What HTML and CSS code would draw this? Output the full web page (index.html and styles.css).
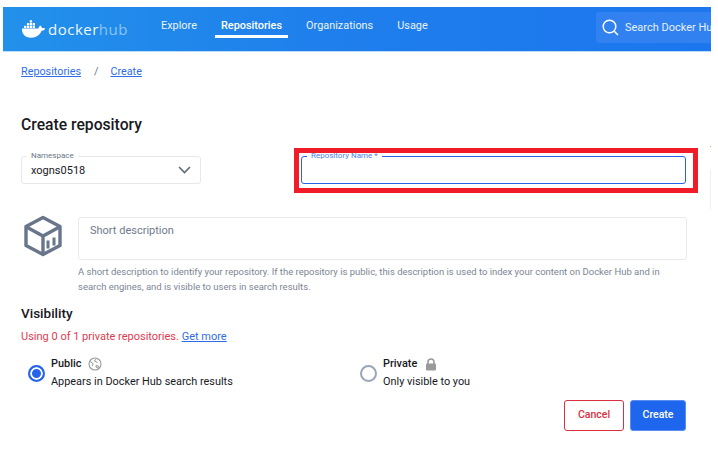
FILE: index.html
```html
<!DOCTYPE html>
<html lang="en">
<head>
<meta charset="utf-8">
<title>Create repository</title>
<link rel="stylesheet" href="styles.css">
</head>
<body>
<div class="page">
  <header class="topbar">
    <div class="brand">
      <svg class="whale" width="25" height="18" viewBox="0 0 25 18" aria-hidden="true">
        <path fill="#fff" d="M1 8.600h16.400c.3-1.400 1-2.500 2-3.100 1 .8 1.500 1.800 1.600 2.700 1.100-.3 2.300-.2 3.300.4-.7 1.500-2 2.200-3.700 2.200C19 15 15.500 17.700 10 17.700 4 17.700 .6 14 1 8.600z"/>
        <path fill="#fff" d="M3 5.700h2.300v2.300H3zM5.900 5.700h2.300v2.300H5.900zM8.800 5.700h2.300v2.300H8.800zM11.700 5.700H14v2.300h-2.300zM5.900 3h2.300v2.300H5.900zM8.800 3h2.300v2.300H8.800zM11.700 3H14v2.300h-2.300zM8.800 .3h2.300v2.300H8.800z"/>
      </svg>
      <span class="brand-docker">docker</span><span class="brand-hub">hub</span>
    </div>
    <nav class="nav">
      <a class="nav-item">Explore</a>
      <a class="nav-item nav-active">Repositories</a>
      <a class="nav-item">Organizations</a>
      <a class="nav-item">Usage</a>
    </nav>
    <div class="search">
      <svg class="search-icon" width="17" height="17" viewBox="0 0 17 17" aria-hidden="true"><circle cx="7.500" cy="7.500" r="6.300" fill="none" stroke="#fff" stroke-width="1.500"/><path d="M12.200 12.200l3.800 3.800" stroke="#fff" stroke-width="1.500" fill="none"/></svg>
      <span class="search-text">Search Docker Hub</span>
    </div>
  </header>

  <main class="content">
    <div class="crumbs"><a class="link">Repositories</a><span class="crumb-sep">/</span><a class="link">Create</a></div>
    <h1 class="title">Create repository</h1>

    <div class="name-row">
      <div class="field ns">
        <span class="legend">Namespace</span>
        <span class="ns-value">xogns0518</span>
        <svg class="chev" width="13" height="8" viewBox="0 0 13 8" aria-hidden="true"><path d="M1 1l5.500 5.500L12 1" fill="none" stroke="#5f6b7c" stroke-width="1.600"/></svg>
      </div>
      <div class="field repo">
        <span class="legend legend-blue">Repository Name *</span>
      </div>
    </div>

    <div class="desc-row">
      <svg class="box" width="40" height="42" viewBox="0 0 40 42" aria-hidden="true">
        <path d="M20 2.500L37 11.500V30.500L20 39.500L3 30.500V11.500Z" fill="none" stroke="#68758a" stroke-width="3.400" stroke-linejoin="round"/>
        <path d="M3.500 12L20 21L36.500 12M20 21V39" fill="none" stroke="#68758a" stroke-width="3.400"/>
        <path d="M25 25.500v8M31 22.500v8" fill="none" stroke="#68758a" stroke-width="3"/>
      </svg>
      <div class="desc-col">
        <div class="desc-box">Short description</div>
        <p class="help">A short description to identify your repository. If the repository is public, this description is used to index your content on Docker Hub and in search engines, and is visible to users in search results.</p>
      </div>
    </div>

    <h2 class="subtitle">Visibility</h2>
    <p class="quota">Using 0 of 1 private repositories. <a class="link">Get more</a></p>

    <div class="vis-row">
      <div class="vis vis-public">
        <span class="radio radio-on"></span>
        <div>
          <div class="vis-title">Public
            <svg class="globe" width="14" height="14" viewBox="0 0 14 14" aria-hidden="true"><circle cx="7" cy="7" r="6" fill="none" stroke="#9a9a9a" stroke-width="1.100"/><path d="M2 4.500L5 6.500 4.500 9M8.500 1.500L6.500 4l3 1.500M8 8.500l2.500.5-.5 2-2-1z" fill="none" stroke="#9a9a9a" stroke-width="1"/></svg>
          </div>
          <div class="vis-sub">Appears in Docker Hub search results</div>
        </div>
      </div>
      <div class="vis">
        <span class="radio"></span>
        <div>
          <div class="vis-title">Private
            <svg class="lock" width="12" height="13" viewBox="0 0 12 13" aria-hidden="true"><path d="M3 6V4a3 3 0 0 1 6 0v2" fill="none" stroke="#9a9a9a" stroke-width="1.600"/><rect x="1" y="5.500" width="10" height="7" rx="1" fill="#9a9a9a"/></svg>
          </div>
          <div class="vis-sub">Only visible to you</div>
        </div>
      </div>
    </div>

    <div class="actions">
      <button class="btn btn-cancel">Cancel</button>
      <button class="btn btn-create">Create</button>
    </div>
  </main>
  <div class="highlight"></div>
  <div class="edge-dot"></div>
  <div class="edge-line"></div>
</div>
</body>
</html>
```
FILE: styles.css
```css
* { box-sizing: border-box; }
html, body { margin: 0; height: 100%; background: #fff; overflow: hidden; }
body { font-family: Roboto, "Liberation Sans", sans-serif; color: #17191e; }
.page { position: relative; width: 718px; height: 451px; padding: 7px 7px 0 3px; }
a { cursor: pointer; }

.topbar { height: 45px; display: flex; align-items: stretch; background: linear-gradient(90deg, #2291ea 0%, #1f7fec 45%, #1c76ee 100%); border-bottom: 1px solid #b9dcf8; overflow: hidden; }
.brand { width: 152px; flex: none; display: flex; align-items: center; padding-left: 18px; }
.whale { flex: none; margin-right: 2px; }
.brand-docker, .brand-hub { font-family: "Open Sans", sans-serif; font-size: 15px; letter-spacing: .5px; color: #f0f7fe; }
.brand-hub { margin-left: 0; color: #8cc3f5; }
.nav { display: flex; gap: 12px; flex: none; width: 441px; }
.nav-item { padding: 12px 6px 0; font-size: 10.900px; color: #e9f3fd; height: 31px; line-height: 13px; border-bottom: 3px solid transparent; }
.nav-active { font-weight: 500; color: #fff; border-bottom-color: #fff; }
.search { flex: 1; margin-top: 5px; height: 31px; background: #3281f0; border-radius: 3px 0 0 3px; display: flex; align-items: center; padding-left: 6px; gap: 6px; min-width: 0; overflow: hidden; white-space: nowrap; }
.search-icon { flex: none; }
.search-text { font-size: 11px; color: #e6f0fd; }

.content { padding: 0 0 0 18px; }
.crumbs { display: flex; font-size: 10.800px; padding-top: 13px; line-height: 13px; height: 26px; color: #6b7686; }
.link { color: #2f6de8; text-decoration: underline; }
.crumb-sep { margin: 0 12px 0 13px; }
.title { margin: 37px 0 0; font-size: 15.700px; line-height: 20px; font-weight: 500; color: #17191e; }

.name-row { display: flex; gap: 100px; margin-top: 21px; }
.field { position: relative; height: 28px; border-radius: 3px; }
.ns { width: 180px; border: 1px solid #e6e8ec; display: flex; align-items: center; padding: 0 9px; justify-content: space-between; }
.repo { width: 385px; border: 1px solid #2563eb; }
.legend { position: absolute; top: -6px; left: 5px; padding: 0 4px; background: #fff; font-size: 8px; line-height: 10px; color: #6b7686; }
.legend-blue { color: #4f82ef; }
.ns-value { font-size: 11px; color: #17191e; }

.desc-row { display: flex; margin-top: 33px; }
.box { flex: none; margin: -2px 15px 0 2px; }
.desc-col { width: 609px; }
.desc-box { height: 43px; border: 1px solid #e8eaed; border-radius: 3px; padding: 6px 11px; font-size: 11px; line-height: 13px; color: #6f7a8b; }
.help { margin: 4px 0 0; font-size: 9.480px; line-height: 15px; color: #7c8594; }

.subtitle { margin: 9px 0 0; font-size: 13.500px; line-height: 20px; font-weight: 500; color: #17191e; }
.quota { margin: 7px 0 0; font-size: 11px; line-height: 14px; color: #df3a52; }

.vis-row { display: flex; margin-top: 11px; }
.vis { display: flex; align-items: center; gap: 6px; font-size: 10.900px; }
.vis-public { width: 339px; padding-left: 7px; }
.vis-title { font-weight: 500; line-height: 18px; display: flex; align-items: center; height: 18px; }
.globe { margin-left: 7px; }
.lock { margin-left: 8px; }
.vis-sub { line-height: 18px; }
.radio { width: 17px; height: 17px; flex: none; border-radius: 50%; border: 2px solid #9aa5b8; background: #fff; }
.radio-on { border-color: #2563eb; box-shadow: inset 0 0 0 2px #fff; background: #2563eb; }

.actions { display: flex; justify-content: flex-end; gap: 6px; width: 665px; margin-top: 9px; }
.btn { width: 60px; height: 31px; border-radius: 3px; font: 500 10.500px/1 Roboto, sans-serif; padding: 0; }
.btn-cancel { background: #fff; border: 1px solid #d8303f; color: #d8303f; }
.btn-create { width: 56px; background: #1f66ee; border: 1px solid #5b8df2; color: #fff; }

.highlight { position: absolute; left: 294px; top: 148px; width: 404px; height: 45px; border: 5px solid #f01c28; pointer-events: none; }
.edge-dot { position: absolute; left: 710px; top: 146px; width: 1px; height: 1px; background: #f09a3e; }
.edge-line { position: absolute; left: 710px; top: 170px; width: 1px; height: 39px; background: #eeeeee; }
```
